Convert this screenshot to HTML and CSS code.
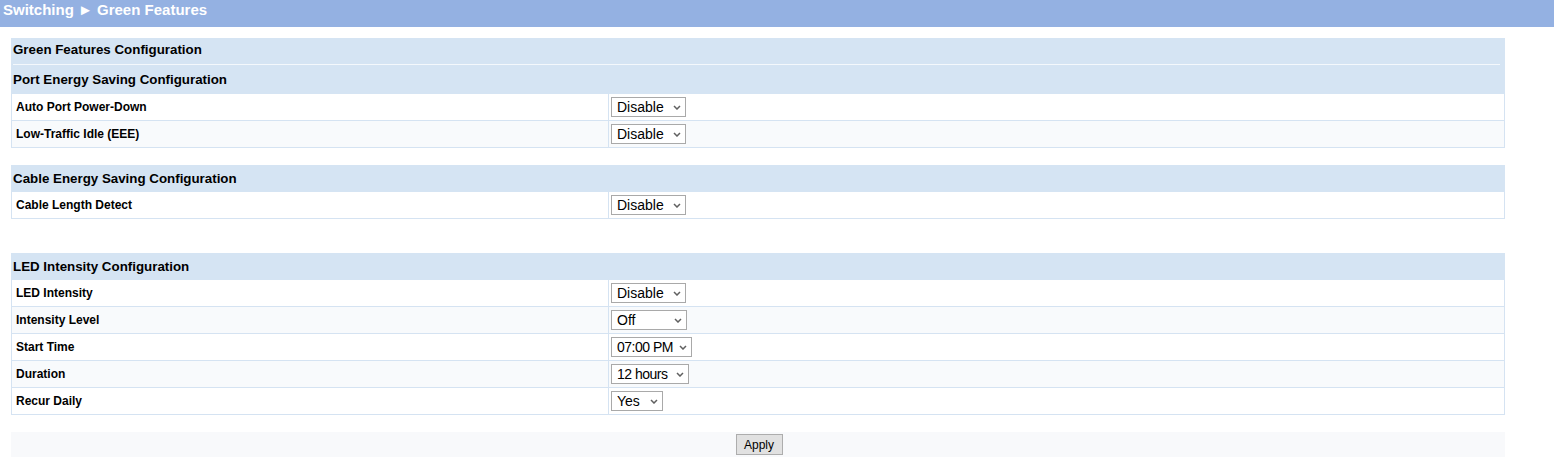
FILE: index.html
```html
<!DOCTYPE html>
<html>
<head>
<meta charset="utf-8">
<link rel="stylesheet" href="styles.css">
</head>
<body>
<div class="topbar">Switching ► Green Features</div>
<div class="content">
  <div class="section">
    <div class="sec-head first">Green Features Configuration</div>
    <div class="sec-head second">Port Energy Saving Configuration</div>
    <div class="row">
      <div class="label">Auto Port Power-Down</div>
      <div class="value"><span class="sel w75">Disable</span></div>
    </div>
    <div class="row alt">
      <div class="label">Low-Traffic Idle (EEE)</div>
      <div class="value"><span class="sel w75">Disable</span></div>
    </div>
  </div>

  <div class="section gap17">
    <div class="sec-head">Cable Energy Saving Configuration</div>
    <div class="row">
      <div class="label">Cable Length Detect</div>
      <div class="value"><span class="sel w75">Disable</span></div>
    </div>
  </div>

  <div class="section gap34">
    <div class="sec-head">LED Intensity Configuration</div>
    <div class="row">
      <div class="label">LED Intensity</div>
      <div class="value"><span class="sel w75">Disable</span></div>
    </div>
    <div class="row alt">
      <div class="label">Intensity Level</div>
      <div class="value"><span class="sel w76">Off</span></div>
    </div>
    <div class="row">
      <div class="label">Start Time</div>
      <div class="value"><span class="sel w81 tight">07:00 PM</span></div>
    </div>
    <div class="row alt">
      <div class="label">Duration</div>
      <div class="value"><span class="sel w78 tight">12 hours</span></div>
    </div>
    <div class="row">
      <div class="label">Recur Daily</div>
      <div class="value"><span class="sel w52">Yes</span></div>
    </div>
  </div>

  <div class="applybar">
    <button class="apply">Apply</button>
  </div>
</div>
</body>
</html>
```

FILE: styles.css
```css
html, body {
  margin: 0;
  padding: 0;
  background: #ffffff;
  font-family: "Liberation Sans", Arial, sans-serif;
  color: #000;
}
.topbar {
  height: 27px;
  line-height: 20px;
  background: #94b1e2;
  color: #ffffff;
  font-weight: bold;
  font-size: 15px;
  padding-left: 3px;
  box-sizing: border-box;
}
.content {
  padding: 11px 0 0 11px;
  width: 1494px;
}
.section {
  border: 1px solid #d5e3f2;
  border-top: none;
  background: #fff;
}
.gap17 { margin-top: 17px; }
.gap34 { margin-top: 34px; }
.sec-head {
  background: #d5e4f3;
  font-size: 13.33px;
  font-weight: bold;
  height: 27px;
  line-height: 27px;
  padding-left: 2px;
  margin: 0 -1px;
}
.sec-head.first {
  height: 28px;
  line-height: 23px;
  position: relative;
}
.sec-head.first::after {
  content: "";
  position: absolute;
  left: 2px;
  right: 5px;
  bottom: 1px;
  height: 1px;
  background: #f4f8fc;
}
.sec-head.second {
  height: 28px;
  line-height: 28px;
}
.row {
  display: grid;
  grid-template-columns: 596px 1fr;
  height: 27px;
  border-top: 1px solid #d5e3f2;
  box-sizing: border-box;
}
.sec-head + .row { border-top: none; height: 26px; }
.row.alt { background: #f8fafc; }
.label {
  font-size: 12px;
  font-weight: bold;
  padding-left: 4px;
  line-height: 26px;
}
.value {
  border-left: 1px solid #d5e3f2;
  padding-left: 2px;
  display: flex;
  align-items: center;
}
.sel {
  display: inline-block;
  box-sizing: border-box;
  height: 20px;
  line-height: 18px;
  border: 1px solid #a9a9a9;
  background: #ffffff url("data:image/svg+xml;utf8,<svg xmlns='http://www.w3.org/2000/svg' width='8' height='5' viewBox='0 0 8 5'><path d='M1 1 L4 4 L7 1' fill='none' stroke='%23606060' stroke-width='1.5'/></svg>") no-repeat right 4px center;
  font-size: 14px;
  padding-left: 5px;
  color: #000;
}
.sel.tight { letter-spacing: -0.5px; }
.w75 { width: 75px; }
.w76 { width: 76px; }
.w81 { width: 81px; }
.w78 { width: 78px; }
.w52 { width: 52px; }
.applybar {
  margin-top: 17px;
  height: 25px;
  background: #f8f9fb;
  display: flex;
  justify-content: center;
  align-items: center;
}
.apply {
  font-family: "Liberation Sans", Arial, sans-serif;
  font-size: 12px;
  height: 21px;
  width: 47px;
  padding: 0;
  margin-left: 2px;
  background: #e1e1e1;
  border: 1px solid #adadad;
  border-radius: 0;
  color: #000;
}
```
